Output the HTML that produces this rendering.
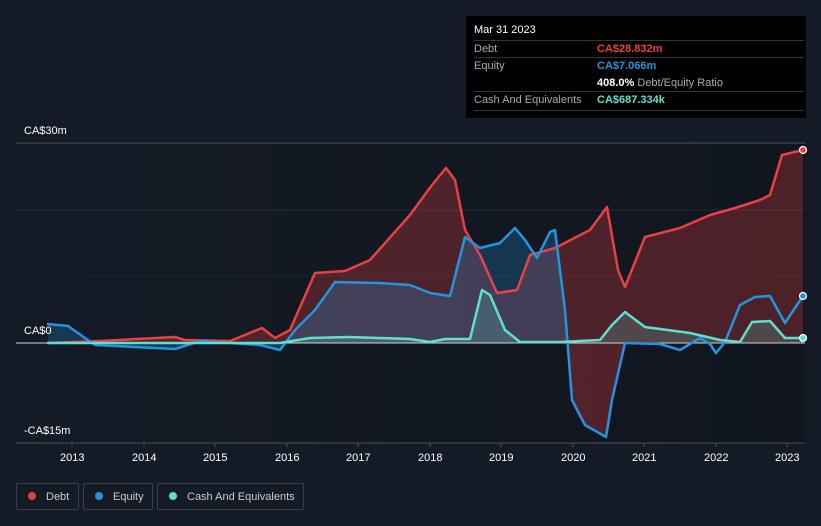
<!DOCTYPE html><html><head><style>
body{margin:0;width:821px;height:526px;background:#151b26;font-family:"Liberation Sans",sans-serif;overflow:hidden;position:relative}
.t{position:absolute;color:#fff;font-size:11px}
.tip{position:absolute;left:466px;top:16px;width:340px;height:102px;background:#000}
.tip div{position:absolute;font-size:11px}
.hl{position:absolute;left:8px;width:330px;height:1px;background:#333}
.leg{position:absolute;top:483px;height:27px;border:1px solid #3a404b;border-radius:2px;color:#ccc;font-size:11px;line-height:27px;box-sizing:border-box}
.leg i{display:inline-block;width:8px;height:8px;border-radius:50%;margin:0 10px 0 11px;vertical-align:-0px}
</style></head><body>
<svg width="821" height="526" style="position:absolute;left:0;top:0">
<defs><linearGradient id="bg" x1="0" x2="1"><stop offset="0" stop-color="#151b26"/><stop offset="1" stop-color="#10151e"/></linearGradient></defs>
<rect x="16" y="143" width="789" height="300" fill="url(#bg)"/>
<line x1="16" y1="143" x2="805" y2="143" stroke="#4a505a"/>
<line x1="16" y1="210" x2="805" y2="210" stroke="#262c36"/>
<line x1="16" y1="276" x2="805" y2="276" stroke="#1c222c"/>
<line x1="16" y1="443" x2="805" y2="443" stroke="#4a505a"/>
<g stroke="#4a505a"><line x1="72" y1="443" x2="72" y2="447"/><line x1="144" y1="443" x2="144" y2="447"/><line x1="215" y1="443" x2="215" y2="447"/><line x1="287" y1="443" x2="287" y2="447"/><line x1="358" y1="443" x2="358" y2="447"/><line x1="430" y1="443" x2="430" y2="447"/><line x1="501" y1="443" x2="501" y2="447"/><line x1="573" y1="443" x2="573" y2="447"/><line x1="644" y1="443" x2="644" y2="447"/><line x1="716" y1="443" x2="716" y2="447"/><line x1="787" y1="443" x2="787" y2="447"/></g>
<path d="M48,343 L100,341 175,337 185,340 230,341 262,328 275,338 290,330 315,273 345,271 370,260 410,215 432,185 446,168 455,180 465,230 480,255 497,293 517,290 530,255 555,248 590,230 607,207 618,270 625,287 645,237 680,228 710,215 735,208 760,200 770,195 782,155 803,150 L803,343 Z" fill="#e84045" fill-opacity="0.28"/>
<path d="M565,343 L565,310 572,400 585,425 606,437 612,400 625,343Z" fill="#e84045" fill-opacity="0.3"/>
<path d="M48,324 L68,326 95,345 175,349 200,341 260,345 280,350 295,330 315,310 335,282 380,283 410,285 430,293 450,296 465,237 480,248 500,243 515,228 525,240 537,258 550,232 555,230 565,310 565,343 L48,343Z" fill="#2394df" fill-opacity="0.25"/>
<path d="M48,343 L280,343 310,338 350,337 410,339 430,342 445,339 470,339 482,290 490,295 505,330 520,342 560,342 600,340 612,325 625,312 645,327 690,333 720,340 740,342 752,322 770,321 785,338 803,338 L803,343Z" fill="#5fe0cc" fill-opacity="0.2"/>
<line x1="16" y1="343" x2="805" y2="343" stroke="#d0d4da" stroke-width="1"/>
<g fill="none" stroke-width="2.5" stroke-linejoin="round" stroke-linecap="round">
<polyline stroke="#e84045" points="48,343 100,341 175,337 185,340 230,341 262,328 275,338 290,330 315,273 345,271 370,260 410,215 432,185 446,168 455,180 465,230 480,255 497,293 517,290 530,255 555,248 590,230 607,207 618,270 625,287 645,237 680,228 710,215 735,208 760,200 770,195 782,155 803,150"/>
<polyline stroke="#2394df" points="48,324 68,326 95,345 175,349 200,341 260,345 280,350 295,330 315,310 335,282 380,283 410,285 430,293 450,296 465,237 480,248 500,243 515,228 525,240 537,258 550,232 555,230 565,310 572,400 585,425 606,437 612,400 625,343 660,344 680,350 700,338 710,344 716,353 725,342 740,305 755,297 770,296 785,323 803,296"/>
<polyline stroke="#5fe0cc" points="48,343 280,343 310,338 350,337 410,339 430,342 445,339 470,339 482,290 490,295 505,330 520,342 560,342 600,340 612,325 625,312 645,327 690,333 720,340 740,342 752,322 770,321 785,338 803,338"/>
</g>
<circle cx="803" cy="150" r="3.5" fill="#e84045" stroke="#fff" stroke-width="1.2"/>
<circle cx="803" cy="296" r="3.5" fill="#2394df" stroke="#fff" stroke-width="1.2"/>
<circle cx="803" cy="338" r="3.5" fill="#5fe0cc" stroke="#fff" stroke-width="1.2"/>
</svg>
<div class="t" style="left:24px;top:125px">CA$30m</div>
<div class="t" style="left:24px;top:325px">CA$0</div>
<div class="t" style="left:24px;top:425px">-CA$15m</div>
<div class="t" style="left:60px;top:452px">2013</div><div class="t" style="left:132px;top:452px">2014</div><div class="t" style="left:203px;top:452px">2015</div><div class="t" style="left:275px;top:452px">2016</div><div class="t" style="left:346px;top:452px">2017</div><div class="t" style="left:418px;top:452px">2018</div><div class="t" style="left:489px;top:452px">2019</div><div class="t" style="left:561px;top:452px">2020</div><div class="t" style="left:632px;top:452px">2021</div><div class="t" style="left:704px;top:452px">2022</div><div class="t" style="left:775px;top:452px">2023</div>
<div class="tip">
<div style="left:8px;top:8px;color:#fff">Mar 31 2023</div>
<div class="hl" style="top:24px"></div>
<div style="left:8px;top:27px;color:#aaa">Debt</div><div style="left:131px;top:27px;color:#e84045;font-weight:bold">CA$28.832m</div>
<div class="hl" style="top:41px"></div>
<div style="left:8px;top:44px;color:#aaa">Equity</div><div style="left:131px;top:44px;color:#2394df;font-weight:bold">CA$7.066m</div>
<div style="left:131px;top:61px;color:#aaa"><b style="color:#fff">408.0%</b> Debt/Equity Ratio</div>
<div class="hl" style="top:75px"></div>
<div style="left:8px;top:78px;color:#aaa">Cash And Equivalents</div><div style="left:131px;top:78px;color:#5fe0cc;font-weight:bold">CA$687.334k</div>
<div class="hl" style="top:94px"></div>
</div>
<div class="leg" style="left:16px;width:63px"><i style="background:#e84045"></i>Debt</div>
<div class="leg" style="left:83px;width:70px"><i style="background:#2394df"></i>Equity</div>
<div class="leg" style="left:157px;width:147px"><i style="background:#5fe0cc"></i>Cash And Equivalents</div>
</body></html>
